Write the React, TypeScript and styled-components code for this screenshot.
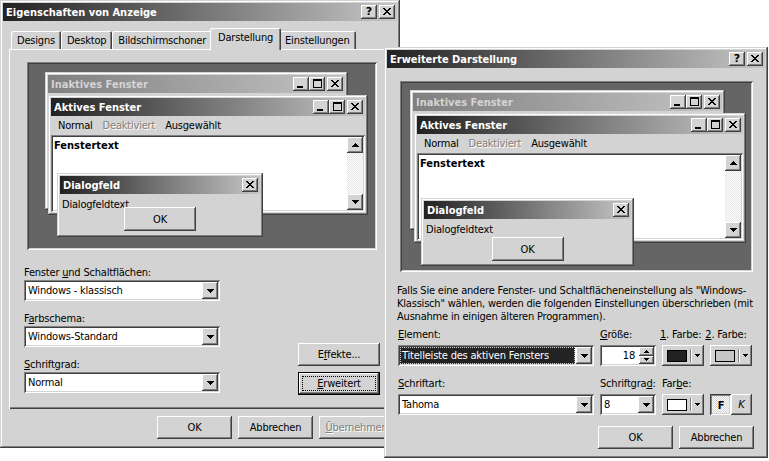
import React from 'react';
import styled, { createGlobalStyle, css } from 'styled-components';

const C = {
  face: '#d3d3d3',
  light: '#ffffff',
  shadow: '#808080',
  dark: '#404040',
  desk: '#656565',
  act1: '#222222',
  act2: '#c6c6c6',
  ina1: '#808080',
  ina2: '#c4c4c4',
  inaText: '#d4d4d4',
  hl: '#242424',
};

const FONT = `"DejaVu Sans Condensed", "Liberation Sans", Arial, sans-serif`;

const GlobalStyle = createGlobalStyle`
  html, body { margin: 0; padding: 0; background: #fff; }
  body { font-family: ${FONT}; font-size: 11px; line-height: 13px; color: #000; letter-spacing: -0.2px; }
  * { box-sizing: border-box; }
  u { text-decoration: underline; text-underline-offset: 1px; }
`;

const raised = css`
  box-shadow: inset -1px -1px ${C.dark}, inset 1px 1px ${C.light}, inset -2px -2px ${C.shadow}, inset 2px 2px ${C.face};
`;
const windowEdge = css`
  box-shadow: inset -1px -1px ${C.dark}, inset 1px 1px ${C.face}, inset -2px -2px ${C.shadow}, inset 2px 2px ${C.light};
`;
const sunken = css`
  box-shadow: inset 1px 1px ${C.shadow}, inset -1px -1px ${C.light}, inset 2px 2px ${C.dark}, inset -2px -2px ${C.face};
`;
const pressed = css`
  box-shadow: inset 1px 1px ${C.dark}, inset -1px -1px ${C.light}, inset 2px 2px ${C.shadow}, inset -2px -2px ${C.face};
`;

/* ---------- pixel glyphs ---------- */
const G = {
  close: ['##....##', '.##..##.', '..####..', '...##...', '..####..', '.##..##.', '##....##'],
  max: ['#########', '#########', '#.......#', '#.......#', '#.......#', '#.......#', '#.......#', '#.......#', '#########'],
  min: ['.........', '.........', '.........', '.........', '.........', '.........', '.........', '######...', '######...'],
  down: ['#######', '.#####.', '..###..', '...#...'],
  up: ['...#...', '..###..', '.#####.', '#######'],
  sdown: ['#####', '.###.', '..#..'],
  sup: ['..#..', '.###.', '#####'],
};

function Pix({ rows, color = '#000' }: { rows: string[]; color?: string }) {
  const w = rows[0].length;
  const h = rows.length;
  const rects: React.ReactNode[] = [];
  rows.forEach((r, y) => {
    for (let x = 0; x < r.length; x++) {
      if (r[x] === '#') rects.push(<rect key={`${x}-${y}`} x={x} y={y} width={1} height={1} />);
    }
  });
  return (
    <svg width={w} height={h} viewBox={`0 0 ${w} ${h}`} shapeRendering="crispEdges" fill={color} style={{ display: 'block' }}>
      {rects}
    </svg>
  );
}

/* ---------- page ---------- */
const Desktop = styled.div`
  position: relative;
  width: 769px;
  height: 461px;
  overflow: hidden;
  background: #fff;
`;

const Dialog = styled.div<{ $x: number; $y: number; $w: number; $h: number }>`
  position: absolute;
  left: ${(p) => p.$x}px;
  top: ${(p) => p.$y}px;
  width: ${(p) => p.$w}px;
  height: ${(p) => p.$h}px;
  background: ${C.face};
  padding: 3px;
  ${windowEdge};
  display: flex;
  flex-direction: column;
`;

const TitleBar = styled.div<{ $inactive?: boolean }>`
  flex: none;
  height: 18px;
  display: flex;
  align-items: center;
  padding: 0 2px 0 3px;
  background: linear-gradient(to right, ${(p) => (p.$inactive ? C.ina1 : C.act1)}, ${(p) => (p.$inactive ? C.ina2 : C.act2)});
  color: ${(p) => (p.$inactive ? C.inaText : '#fff')};
  font-weight: bold;
  font-size: 11px;
  letter-spacing: 0;
`;

const TitleText = styled.span`
  flex: 1;
  white-space: nowrap;
  overflow: hidden;
`;

const CapButtons = styled.div`
  display: flex;
  gap: 2px;
`;

const CapGroup = styled.div`
  display: flex;
`;

const CapButton = styled.div`
  width: 16px;
  height: 14px;
  background: ${C.face};
  ${raised};
  display: flex;
  align-items: center;
  justify-content: center;
  color: #000;
  font-weight: bold;
  font-size: 11px;
  font-family: "DejaVu Sans", sans-serif;
  padding-bottom: 1px;
`;

/* ---------- left dialog ---------- */
const LeftBody = styled.div`
  flex: 1;
  display: flex;
  flex-direction: column;
  padding: 0 6px;
`;

const TabStrip = styled.div`
  margin-top: 7px;
  height: 22px;
  display: flex;
  align-items: flex-end;
  padding-left: 2px;
  position: relative;
  z-index: 1;
`;

const Tab = styled.div<{ $active?: boolean }>`
  height: ${(p) => (p.$active ? 22 : 18)}px;
  margin: 0 ${(p) => (p.$active ? -2 : 0)}px ${(p) => (p.$active ? 0 : 1)}px;
  padding: ${(p) => (p.$active ? '0 8px 3px' : '1px 6px 0')};
  display: flex;
  align-items: center;
  white-space: nowrap;
  background: ${C.face};
  border-radius: 2px 2px 0 0;
  box-shadow: inset 1px 1px ${C.light}, inset -1px 0 ${C.dark}, inset -2px 0 ${C.shadow};
  position: relative;
  z-index: ${(p) => (p.$active ? 2 : 0)};
`;

const TabPanel = styled.div`
  margin-top: -1px;
  height: 360px;
  background: ${C.face};
  box-shadow: inset 1px 1px ${C.light}, inset -1px -1px ${C.dark}, inset -2px -2px ${C.shadow};
  padding: 13px 0 0 15px;
  display: flex;
  flex-direction: column;
`;

const ControlsArea = styled.div`
  display: flex;
  margin-top: 16px;
`;

const FieldColumn = styled.div`
  width: 196px;
  display: flex;
  flex-direction: column;
  gap: 11px;
`;

const FieldGroup = styled.div`
  display: flex;
  flex-direction: column;
  gap: 1px;
`;

const FieldLabel = styled.div`
  height: 13px;
  white-space: nowrap;
`;

const SideButtons = styled.div`
  margin-left: 78px;
  margin-bottom: -2px;
  display: flex;
  flex-direction: column;
  justify-content: flex-end;
  gap: 6px;
`;

const PushButton = styled.div<{ $w?: number; $h?: number; $disabled?: boolean }>`
  width: ${(p) => p.$w ?? 75}px;
  height: ${(p) => p.$h ?? 23}px;
  flex: none;
  background: ${C.face};
  ${raised};
  display: flex;
  align-items: center;
  justify-content: center;
  white-space: nowrap;
  color: ${(p) => (p.$disabled ? C.shadow : '#000')};
  text-shadow: ${(p) => (p.$disabled ? `1px 1px 0 ${C.light}` : 'none')};
`;

const DefaultButton = styled(PushButton)`
  position: relative;
  box-shadow: inset 0 0 0 1px #000, inset -2px -2px ${C.dark}, inset 2px 2px ${C.light}, inset -3px -3px ${C.shadow};
  &::after {
    content: '';
    position: absolute;
    inset: 4px;
    border: 1px dotted #000;
  }
`;

const DialogButtons = styled.div<{ $right?: number; $top: number }>`
  display: flex;
  justify-content: flex-end;
  gap: 6px;
  margin-top: ${(p) => p.$top}px;
  margin-right: ${(p) => p.$right ?? 0}px;
`;

/* ---------- combo ---------- */
const ComboFrame = styled.div<{ $w: number }>`
  width: ${(p) => p.$w}px;
  height: 21px;
  background: #fff;
  ${sunken};
  padding: 2px;
  display: flex;
`;

const ComboText = styled.div<{ $selected?: boolean }>`
  flex: 1;
  display: flex;
  align-items: center;
  padding-left: 2px;
  margin-right: 1px;
  white-space: nowrap;
  overflow: hidden;
  background: ${(p) => (p.$selected ? C.hl : 'transparent')};
  color: ${(p) => (p.$selected ? '#fff' : '#000')};
  outline: ${(p) => (p.$selected ? `1px dotted ${C.face}` : 'none')};
  outline-offset: -1px;
`;

const ArrowButton = styled.div`
  width: 16px;
  background: ${C.face};
  ${raised};
  display: flex;
  align-items: center;
  justify-content: center;
`;

function Combo({ w, children, selected }: { w: number; children: React.ReactNode; selected?: boolean }) {
  return (
    <ComboFrame $w={w}>
      <ComboText $selected={selected}>{children}</ComboText>
      <ArrowButton>
        <Pix rows={G.down} />
      </ArrowButton>
    </ComboFrame>
  );
}

/* ---------- preview ---------- */
type Rect = { x: number; y: number; w: number; h: number };
type PreviewCfg = { w: number; h: number; inactive: Rect; active: Rect; dialog: Rect & { okGap: number } };

const PreviewBox = styled.div<{ $w: number; $h: number; $ml: number }>`
  position: relative;
  flex: none;
  width: ${(p) => p.$w}px;
  height: ${(p) => p.$h}px;
  margin-left: ${(p) => p.$ml}px;
  background: ${C.desk};
  ${sunken};
`;

const MiniWin = styled.div<{ $x: number; $y: number; $w: number; $h: number }>`
  position: absolute;
  left: ${(p) => p.$x}px;
  top: ${(p) => p.$y}px;
  width: ${(p) => p.$w}px;
  height: ${(p) => p.$h}px;
  background: ${C.face};
  padding: 3px;
  ${windowEdge};
  display: flex;
  flex-direction: column;
  overflow: hidden;
`;

const MiniMenu = styled.div`
  height: 19px;
  flex: none;
  display: flex;
  align-items: center;
  padding-left: 2px;
`;

const MenuItem = styled.span<{ $disabled?: boolean }>`
  padding: 0 5px;
  white-space: nowrap;
  color: ${(p) => (p.$disabled ? C.shadow : '#000')};
  text-shadow: ${(p) => (p.$disabled ? `1px 1px 0 ${C.light}` : 'none')};
`;

const MiniField = styled.div`
  flex: 1;
  background: #fff;
  ${sunken};
  padding: 2px;
  display: flex;
`;

const FieldText = styled.div`
  flex: 1;
  font-weight: bold;
  letter-spacing: 0;
  padding: 2px 0 0 1px;
`;

const ScrollBar = styled.div`
  width: 16px;
  display: flex;
  flex-direction: column;
  background: repeating-conic-gradient(#fff 0 25%, #e4e4e4 0 50%) 0 0 / 2px 2px;
`;

const ScrollBtn = styled.div`
  height: 16px;
  background: ${C.face};
  ${raised};
  display: flex;
  align-items: center;
  justify-content: center;
`;

const ScrollTrack = styled.div`
  flex: 1;
`;

const MiniDlgText = styled.div`
  height: 13px;
  margin: 4px 0 0 2px;
  white-space: nowrap;
`;

const MiniOk = styled(PushButton)<{ $gap: number }>`
  align-self: center;
  margin-top: ${(p) => p.$gap}px;
  position: relative;
`;

function CaptionSet({ help, close = true, minmax }: { help?: boolean; close?: boolean; minmax?: boolean }) {
  return (
    <CapButtons>
      {minmax && (
        <CapGroup>
          <CapButton>
            <Pix rows={G.min} />
          </CapButton>
          <CapButton>
            <Pix rows={G.max} />
          </CapButton>
        </CapGroup>
      )}
      {help && <CapButton>?</CapButton>}
      {close && (
        <CapButton>
          <Pix rows={G.close} />
        </CapButton>
      )}
    </CapButtons>
  );
}

function Preview({ cfg, ml }: { cfg: PreviewCfg; ml: number }) {
  const { inactive: i, active: a, dialog: d } = cfg;
  return (
    <PreviewBox $w={cfg.w} $h={cfg.h} $ml={ml}>
      <MiniWin $x={i.x} $y={i.y} $w={i.w} $h={i.h}>
        <TitleBar $inactive>
          <TitleText>Inaktives Fenster</TitleText>
          <CaptionSet minmax />
        </TitleBar>
      </MiniWin>
      <MiniWin $x={a.x} $y={a.y} $w={a.w} $h={a.h}>
        <TitleBar>
          <TitleText>Aktives Fenster</TitleText>
          <CaptionSet minmax />
        </TitleBar>
        <MiniMenu>
          <MenuItem>Normal</MenuItem>
          <MenuItem $disabled>Deaktiviert</MenuItem>
          <MenuItem>Ausgewählt</MenuItem>
        </MiniMenu>
        <MiniField>
          <FieldText>Fenstertext</FieldText>
          <ScrollBar>
            <ScrollBtn>
              <Pix rows={G.up} />
            </ScrollBtn>
            <ScrollTrack />
            <ScrollBtn>
              <Pix rows={G.down} />
            </ScrollBtn>
          </ScrollBar>
        </MiniField>
      </MiniWin>
      <MiniWin $x={d.x} $y={d.y} $w={d.w} $h={d.h}>
        <TitleBar>
          <TitleText>Dialogfeld</TitleText>
          <CaptionSet />
        </TitleBar>
        <MiniDlgText>Dialogfeldtext</MiniDlgText>
        <MiniOk $w={72} $h={24} $gap={d.okGap}>
          OK
        </MiniOk>
      </MiniWin>
    </PreviewBox>
  );
}

const LEFT_PREVIEW: PreviewCfg = {
  w: 350,
  h: 188,
  inactive: { x: 18, y: 10, w: 303, h: 138 },
  active: { x: 21, y: 33, w: 320, h: 120 },
  dialog: { x: 30, y: 111, w: 206, h: 64, okGap: -4 },
};

const RIGHT_PREVIEW: PreviewCfg = {
  w: 353,
  h: 191,
  inactive: { x: 10, y: 9, w: 315, h: 140 },
  active: { x: 14, y: 32, w: 332, h: 130 },
  dialog: { x: 21, y: 117, w: 213, h: 68, okGap: 1 },
};

/* ---------- right dialog ---------- */
const RightBody = styled.div`
  flex: 1;
  display: flex;
  flex-direction: column;
  padding: 13px 11px 0 10px;
`;

const Description = styled.p`
  margin: 12px 0 0;
  white-space: nowrap;
  line-height: 13px;
`;

const SettingsGrid = styled.div`
  margin: 0 0 0 1px;
  display: grid;
  grid-template-columns: 196px 56px 42px 42px;
  grid-template-rows: 22px 21px 28px 21px;
  column-gap: 6px;
`;

const GridLabel = styled.div`
  align-self: end;
  margin-bottom: 4px;
  white-space: nowrap;
`;

const LabelPair = styled.div`
  align-self: end;
  margin-bottom: 4px;
  white-space: nowrap;
  display: flex;
  gap: 4px;
  margin-left: -2px;
`;

const SpinFrame = styled.div`
  height: 21px;
  background: #fff;
  ${sunken};
  padding: 2px;
  display: flex;
`;

const SpinText = styled.div`
  flex: 1;
  padding-right: 4px;
  display: flex;
  align-items: center;
  justify-content: flex-end;
`;

const SpinButtons = styled.div`
  width: 15px;
  display: flex;
  flex-direction: column;
`;

const SpinBtn = styled.div`
  flex: 1;
  background: ${C.face};
  ${raised};
  display: flex;
  align-items: center;
  justify-content: center;
`;

const ColorButton = styled.div`
  height: 21px;
  background: ${C.face};
  ${raised};
  display: flex;
  align-items: center;
  padding: 0 4px 0 5px;
  gap: 3px;
`;

const Swatch = styled.div<{ $c: string }>`
  width: 21px;
  height: 12px;
  border: 1px solid #000;
  background: ${(p) => p.$c};
`;

const Sep = styled.div`
  width: 2px;
  height: 13px;
  border-left: 1px solid ${C.shadow};
  border-right: 1px solid ${C.light};
`;

const StyleButtons = styled.div`
  display: flex;
`;

const StyleBtn = styled.div<{ $on?: boolean; $italic?: boolean }>`
  width: 21px;
  height: 21px;
  display: flex;
  align-items: center;
  justify-content: center;
  background: ${(p) => (p.$on ? `repeating-conic-gradient(#fff 0 25%, ${C.face} 0 50%) 0 0 / 2px 2px` : C.face)};
  ${(p) => (p.$on ? pressed : raised)};
  font-weight: ${(p) => (p.$on ? 'bold' : 'normal')};
  font-style: ${(p) => (p.$italic ? 'italic' : 'normal')};
  padding: ${(p) => (p.$on ? '1px 0 0 1px' : '0')};
`;

function ColorPick({ c }: { c: string }) {
  return (
    <ColorButton>
      <Swatch $c={c} />
      <Sep />
      <Pix rows={G.sdown} />
    </ColorButton>
  );
}

export default function App() {
  return (
    <>
      <GlobalStyle />
      <Desktop>
        <Dialog $x={0} $y={0} $w={400} $h={448}>
          <TitleBar>
            <TitleText>Eigenschaften von Anzeige</TitleText>
            <CaptionSet help />
          </TitleBar>
          <LeftBody>
            <TabStrip>
              <Tab>Designs</Tab>
              <Tab>Desktop</Tab>
              <Tab>Bildschirmschoner</Tab>
              <Tab $active>Darstellung</Tab>
              <Tab>Einstellungen</Tab>
            </TabStrip>
            <TabPanel>
              <Preview cfg={LEFT_PREVIEW} ml={3} />
              <ControlsArea>
                <FieldColumn>
                  <FieldGroup>
                    <FieldLabel>
                      Fenster <u>u</u>nd Schaltflächen:
                    </FieldLabel>
                    <Combo w={196}>Windows - klassisch</Combo>
                  </FieldGroup>
                  <FieldGroup>
                    <FieldLabel>
                      F<u>a</u>rbschema:
                    </FieldLabel>
                    <Combo w={196}>Windows-Standard</Combo>
                  </FieldGroup>
                  <FieldGroup>
                    <FieldLabel>
                      <u>S</u>chriftgrad:
                    </FieldLabel>
                    <Combo w={196}>Normal</Combo>
                  </FieldGroup>
                </FieldColumn>
                <SideButtons>
                  <PushButton $w={82}>
                    E<u>f</u>fekte...
                  </PushButton>
                  <DefaultButton $w={82}>
                    <u>E</u>rweitert
                  </DefaultButton>
                </SideButtons>
              </ControlsArea>
            </TabPanel>
            <DialogButtons $top={7} $right={-3}>
              <PushButton>OK</PushButton>
              <PushButton>Abbrechen</PushButton>
              <PushButton $disabled>
                <u>Ü</u>bernehmen
              </PushButton>
            </DialogButtons>
          </LeftBody>
        </Dialog>

        <Dialog $x={384} $y={47} $w={384} $h={411}>
          <TitleBar>
            <TitleText>Erweiterte Darstellung</TitleText>
            <CaptionSet help />
          </TitleBar>
          <RightBody>
            <Preview cfg={RIGHT_PREVIEW} ml={3} />
            <Description>
              Falls Sie eine andere Fenster- und Schaltflächeneinstellung als "Windows-
              <br />
              Klassisch" wählen, werden die folgenden Einstellungen überschrieben (mit
              <br />
              Ausnahme in einigen älteren Programmen).
            </Description>
            <SettingsGrid>
              <GridLabel>
                <u>E</u>lement:
              </GridLabel>
              <GridLabel>
                <u>G</u>röße:
              </GridLabel>
              <LabelPair>
                <span>
                  <u>1</u>. Farbe:
                </span>
                <span>
                  <u>2</u>. Farbe:
                </span>
              </LabelPair>
              <div />
              <Combo w={196} selected>
                Titelleiste des aktiven Fensters
              </Combo>
              <SpinFrame>
                <SpinText>18</SpinText>
                <SpinButtons>
                  <SpinBtn>
                    <Pix rows={G.sup} />
                  </SpinBtn>
                  <SpinBtn>
                    <Pix rows={G.sdown} />
                  </SpinBtn>
                </SpinButtons>
              </SpinFrame>
              <ColorPick c="#222222" />
              <ColorPick c="#c6c6c6" />
              <GridLabel>
                <u>S</u>chriftart:
              </GridLabel>
              <GridLabel>
                Schriftgra<u>d</u>:
              </GridLabel>
              <GridLabel>
                Far<u>b</u>e:
              </GridLabel>
              <div />
              <Combo w={196}>Tahoma</Combo>
              <Combo w={56}>8</Combo>
              <ColorPick c="#ffffff" />
              <StyleButtons>
                <StyleBtn $on>F</StyleBtn>
                <StyleBtn $italic>K</StyleBtn>
              </StyleButtons>
            </SettingsGrid>
            <DialogButtons $top={11}>
              <PushButton>OK</PushButton>
              <PushButton>Abbrechen</PushButton>
            </DialogButtons>
          </RightBody>
        </Dialog>
      </Desktop>
    </>
  );
}
